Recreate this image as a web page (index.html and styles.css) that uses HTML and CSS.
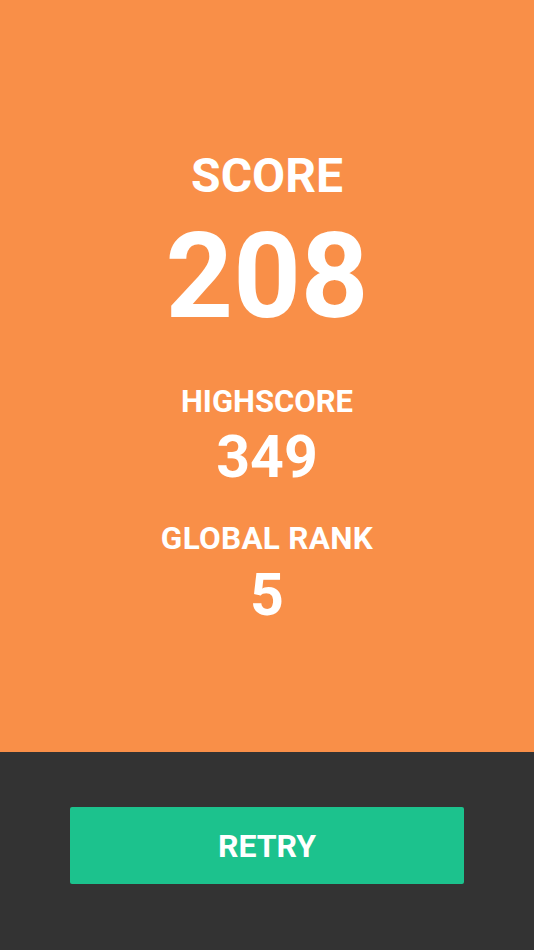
FILE: index.html
```html
<!DOCTYPE html>
<html>
<head>
<meta charset="utf-8">
<link rel="stylesheet" href="styles.css">
</head>
<body>
<div class="screen">
  <section class="results">
    <div class="label label-lg">SCORE</div>
    <div class="value value-xl">208</div>
    <div class="label label-md gap-high">HIGHSCORE</div>
    <div class="value value-md">349</div>
    <div class="label label-md label-rank gap-rank">GLOBAL RANK</div>
    <div class="value value-md">5</div>
  </section>
  <section class="actions">
    <button class="retry">RETRY</button>
  </section>
</div>
</body>
</html>
```
FILE: styles.css
```css
html, body {
  margin: 0;
  padding: 0;
}
body {
  font-family: Roboto, "Liberation Sans", sans-serif;
  font-weight: 700;
  color: #ffffff;
  background: #333333;
}
.screen {
  display: flex;
  flex-direction: column;
  width: 534px;
  height: 950px;
}
.results {
  height: 752px;
  box-sizing: border-box;
  background: #f98f48;
  display: flex;
  flex-direction: column;
  align-items: center;
  padding-top: 152px;
}
.label, .value {
  line-height: 1;
  text-align: center;
}
.label-lg {
  font-size: 48px;
}
.value-xl {
  font-size: 118px;
  margin-top: 18px;
}
.label-md {
  font-size: 31px;
}
.label-rank {
  font-size: 31.5px;
  letter-spacing: 0.3px;
}
.value-md {
  font-size: 59px;
  margin-top: 10px;
}
.gap-high {
  margin-top: 50px;
}
.gap-rank {
  margin-top: 37px;
}
.actions {
  flex: 1;
  background: #333333;
  display: flex;
  justify-content: center;
  padding-top: 55px;
}
.retry {
  width: 394px;
  height: 77px;
  border: none;
  border-radius: 2px;
  background: #1cc28d;
  color: #ffffff;
  font-family: Roboto, "Liberation Sans", sans-serif;
  font-weight: 700;
  font-size: 32px;
  line-height: 1;
  padding: 0;
  display: flex;
  align-items: center;
  justify-content: center;
}
```
